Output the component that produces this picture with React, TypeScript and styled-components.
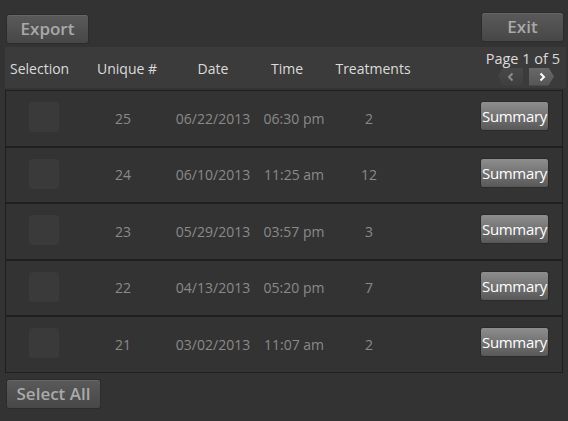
import React from "react";
import styled, { createGlobalStyle } from "styled-components";

const Global = createGlobalStyle`
  html, body { margin: 0; padding: 0; background: #333333; }
  body { font-family: "Open Sans", "Noto Sans", sans-serif; }
`;

const Page = styled.div`
  width: 568px;
  height: 421px;
  background: #333333;
  box-sizing: border-box;
  display: flex;
  flex-direction: column;
  overflow: hidden;
`;

const TopBar = styled.div`
  display: flex;
  justify-content: space-between;
  align-items: flex-start;
  padding: 12px 4px 0 6px;
  height: 35px;
`;

const DarkButton = styled.button<{ $w: number; $mt?: number }>`
  width: ${(p) => p.$w}px;
  height: 30px;
  margin-top: ${(p) => p.$mt ?? 0}px;
  padding: 0;
  border: 1px solid #2c2c2c;
  border-radius: 3px;
  background: linear-gradient(#5a5a5a, #474747);
  box-shadow: inset 0 1px 0 rgba(255, 255, 255, 0.08);
  color: #a9a9a9;
  font-family: "Open Sans", sans-serif;
  font-weight: 600;
  font-size: 17px;
  line-height: 28px;
  text-align: center;
`;

const HeaderBand = styled.div`
  margin: 0 2px 0 5px;
  height: 41px;
  background: #3b3b3b;
  display: grid;
  grid-template-columns: 65px 114px 58px 90px 82px 1fr;
  align-items: center;
  color: #dcdcdc;
  font-size: 14px;
`;

const HeadCell = styled.div<{ $left?: boolean }>`
  text-align: ${(p) => (p.$left ? "left" : "center")};
  padding-left: ${(p) => (p.$left ? "5px" : "0")};
  white-space: nowrap;
  padding-top: 2px;
`;

const Pager = styled.div`
  justify-self: end;
  display: flex;
  flex-direction: column;
  align-items: flex-end;
  padding-right: 6px;
  padding-top: 0px;
`;

const PageLabel = styled.div`
  font-size: 14.5px;
  line-height: 17px;
  color: #dcdcdc;
  white-space: nowrap;
`;

const PagerButtons = styled.div`
  display: flex;
  gap: 6px;
  margin-top: 1px;
  margin-right: 6px;
`;

const ArrowBtn = styled.div<{ $active?: boolean }>`
  width: 25px;
  height: 18px;
  display: flex;
  align-items: center;
  justify-content: center;
  background: ${(p) => (p.$active ? "linear-gradient(#686868, #555)" : "linear-gradient(#484848, #3f3f3f)")};
  clip-path: ${(p) =>
    p.$active
      ? "polygon(0 0, 78% 0, 100% 50%, 78% 100%, 0 100%)"
      : "polygon(20% 0, 100% 0, 100% 100%, 20% 100%, 0 50%)"};
  color: ${(p) => (p.$active ? "#ffffff" : "#8a8a8a")};
`;

const List = styled.div`
  margin: 2px 5px 0 5px;
  display: flex;
  flex-direction: column;
`;

const Row = styled.div`
  height: 54.5px;
  border: 1px solid #1f1f1f;
  background: #333333;
  display: grid;
  grid-template-columns: 76px 82px 98px 64px 86px 1fr;
  align-items: center;
  color: #8a8a8a;
  font-size: 14px;
`;

const Cell = styled.div`
  text-align: center;
  white-space: nowrap;
`;

const Check = styled.div`
  width: 30px;
  height: 30px;
  margin: 0 auto 2px;
  border-radius: 3px;
  background: #3a3a3a;
`;

const SummaryCell = styled.div`
  justify-self: end;
  padding-right: 13px;
  margin-bottom: 4px;
`;

const SummaryButton = styled.button`
  width: 69px;
  height: 30px;
  padding: 0;
  border: 1px solid #2a2a2a;
  border-radius: 3px;
  background: linear-gradient(#8e8e8e, #585858);
  color: #ffffff;
  font-family: "Open Sans", sans-serif;
  font-size: 15px;
  line-height: 28px;
  letter-spacing: -0.3px;
  white-space: nowrap;
`;

const Bottom = styled.div`
  padding: 6px 0 0 6px;
`;

const rows = [
  { id: 25, date: "06/22/2013", time: "06:30 pm", t: 2 },
  { id: 24, date: "06/10/2013", time: "11:25 am", t: 12 },
  { id: 23, date: "05/29/2013", time: "03:57 pm", t: 3 },
  { id: 22, date: "04/13/2013", time: "05:20 pm", t: 7 },
  { id: 21, date: "03/02/2013", time: "11:07 am", t: 2 },
];

const Chevron = ({ dir }: { dir: "l" | "r" }) => (
  <svg width="8" height="10" viewBox="0 0 8 10">
    <path
      d={dir === "l" ? "M5.5 1.5 L2 5 L5.5 8.5" : "M2.5 1.5 L6 5 L2.5 8.5"}
      fill="none"
      stroke="currentColor"
      strokeWidth="2"
    />
  </svg>
);

export default function App() {
  return (
    <Page>
      <Global />
      <TopBar>
        <DarkButton $w={83} $mt={2}>Export</DarkButton>
        <DarkButton $w={83}>Exit</DarkButton>
      </TopBar>
      <HeaderBand>
        <HeadCell $left>Selection</HeadCell>
        <HeadCell>Unique #</HeadCell>
        <HeadCell>Date</HeadCell>
        <HeadCell>Time</HeadCell>
        <HeadCell>Treatments</HeadCell>
        <Pager>
          <PageLabel>Page 1 of 5</PageLabel>
          <PagerButtons>
            <ArrowBtn>
              <Chevron dir="l" />
            </ArrowBtn>
            <ArrowBtn $active>
              <Chevron dir="r" />
            </ArrowBtn>
          </PagerButtons>
        </Pager>
      </HeaderBand>
      <List>
        {rows.map((r) => (
          <Row key={r.id}>
            <Check />
            <Cell>{r.id}</Cell>
            <Cell>{r.date}</Cell>
            <Cell>{r.time}</Cell>
            <Cell>{r.t}</Cell>
            <SummaryCell>
              <SummaryButton>Summary</SummaryButton>
            </SummaryCell>
          </Row>
        ))}
      </List>
      <Bottom>
        <DarkButton $w={95}>Select All</DarkButton>
      </Bottom>
    </Page>
  );
}
